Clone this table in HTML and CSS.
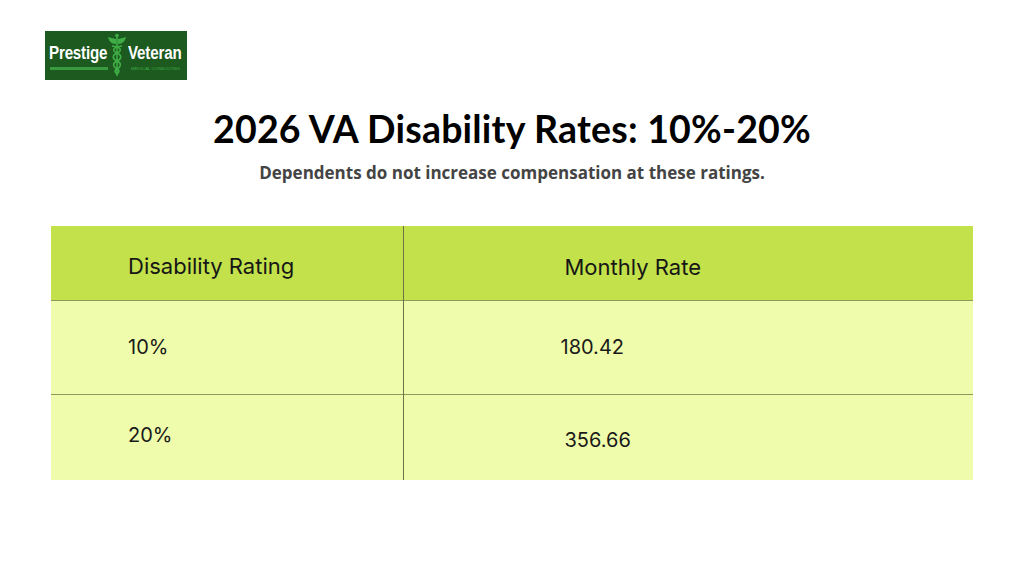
FILE: index.html
```html
<!DOCTYPE html>
<html lang="en">
<head>
<meta charset="utf-8">
<title>2026 VA Disability Rates: 10%-20%</title>
<link rel="stylesheet" href="styles.css">
</head>
<body>
<header class="top">
  <div class="logo">
    <div class="logo-left">
      <span class="logo-word">Prestige</span>
      <span class="logo-bar"></span>
    </div>
    <svg class="logo-icon" viewBox="0 0 18 44" width="18" height="44" aria-hidden="true">
      <path d="M9 3 L9 43" stroke="#3fae46" stroke-width="1.6"/>
      <circle cx="9" cy="2.5" r="1.8" fill="#3fae46"/>
      <path d="M8 6 C5 5 2 5 0 4 C1 8 3 11 8 11 Z" fill="#3fae46"/>
      <path d="M10 6 C13 5 16 5 18 4 C17 8 15 11 10 11 Z" fill="#3fae46"/>
      <path d="M4 13 C14 14 14 18 9 20 C4 22 4 26 9 28 C14 30 13 34 9 36 C6 37 7 40 9 41" stroke="#3fae46" stroke-width="1.6" fill="none"/>
      <path d="M14 13 C4 14 4 18 9 20 C14 22 14 26 9 28 C4 30 5 34 9 36 C12 37 11 40 9 41" stroke="#3fae46" stroke-width="1.6" fill="none"/>
    </svg>
    <div class="logo-right">
      <span class="logo-word">Veteran</span>
      <span class="logo-sub">MEDICAL CONSULTING</span>
    </div>
  </div>
</header>

<main>
  <h1 class="title">2026 VA Disability Rates: 10%-20%</h1>
  <p class="subtitle">Dependents do not increase compensation at these ratings.</p>

  <table class="rates">
    <thead>
      <tr>
        <th class="c1 head-l">Disability Rating</th>
        <th class="c2 head-r">Monthly Rate</th>
      </tr>
    </thead>
    <tbody>
      <tr class="r1">
        <td class="c1">10%</td>
        <td class="c2 shift-l">180.42</td>
      </tr>
      <tr class="r2">
        <td class="c1 up">20%</td>
        <td class="c2 down">356.66</td>
      </tr>
    </tbody>
  </table>
</main>
</body>
</html>
```

FILE: styles.css
```css
html, body {
  margin: 0;
  padding: 0;
  background: #ffffff;
}

body {
  width: 1024px;
  height: 585px;
  overflow: hidden;
  font-family: "Inter", "Noto Sans", sans-serif;
  color: #111;
}

.top {
  padding: 31px 0 0 45px;
}

.logo {
  width: 142px;
  height: 49px;
  box-sizing: border-box;
  background: #1d5a1f;
  display: flex;
  align-items: flex-start;
  padding: 0 0 0 4px;
  overflow: hidden;
}

.logo-left,
.logo-right {
  display: flex;
  flex-direction: column;
  padding-top: 12px;
}

.logo-left {
  width: 58px;
}

.logo-right {
  width: 60px;
}

.logo-word {
  font-family: "Liberation Sans", "Noto Sans", sans-serif;
  font-weight: 700;
  font-size: 18px;
  line-height: 21px;
  color: #ffffff;
  letter-spacing: -0.2px;
  transform: scaleX(0.84);
  transform-origin: left center;
  white-space: nowrap;
  display: block;
}

.logo-bar {
  display: block;
  width: 58px;
  height: 3px;
  margin-top: 3px;
  margin-left: 1px;
  background: #3a9a3e;
}

.logo-icon {
  margin-top: 2px;
  margin-left: 1px;
  margin-right: 2px;
  flex: none;
}

.logo-sub {
  font-family: "Liberation Sans", sans-serif;
  font-size: 4.4px;
  line-height: 6px;
  color: #3fae46;
  margin-top: 2px;
  margin-left: 3px;
  white-space: nowrap;
}

main {
  display: flex;
  flex-direction: column;
  align-items: center;
}

.title {
  margin: 26px 0 0 0;
  font-family: "Lato", "Noto Sans", sans-serif;
  font-weight: 700;
  font-size: 37.5px;
  line-height: 46px;
  color: #000;
  letter-spacing: 0.2px;
}

.subtitle {
  margin: 10px 0 0 0;
  font-family: "Open Sans", "Noto Sans", sans-serif;
  font-weight: 700;
  font-size: 17px;
  line-height: 22px;
  color: #444444;
}

.rates {
  margin-top: 42px;
  width: 922px;
  border-collapse: collapse;
  table-layout: fixed;
}

.rates th,
.rates td {
  box-sizing: border-box;
  text-align: left;
  font-weight: 400;
  padding: 0;
  vertical-align: middle;
  white-space: nowrap;
}

.rates .c1 {
  width: 352px;
  padding-left: 77px;
  border-right: 1px solid #6c7148;
}

.rates .c2 {
  padding-left: 161px;
}

.rates thead tr {
  height: 74px;
  background: #c2e14b;
}

.rates th {
  font-size: 22px;
  color: #161616;
}

.rates th.head-l {
  padding-top: 6px;
}

.rates th.head-r {
  padding-top: 9px;
}

.rates tbody tr {
  background: #effcab;
  border-top: 1px solid #8a9a58;
}

.rates tbody td {
  font-size: 20px;
  color: #1a1a1a;
}

.rates .r1 {
  height: 94px;
}

.rates .r2 {
  height: 86px;
}

.rates td.shift-l {
  padding-left: 157px;
}

.rates td.up {
  padding-bottom: 5px;
}

.rates td.down {
  padding-top: 6px;
}
```
